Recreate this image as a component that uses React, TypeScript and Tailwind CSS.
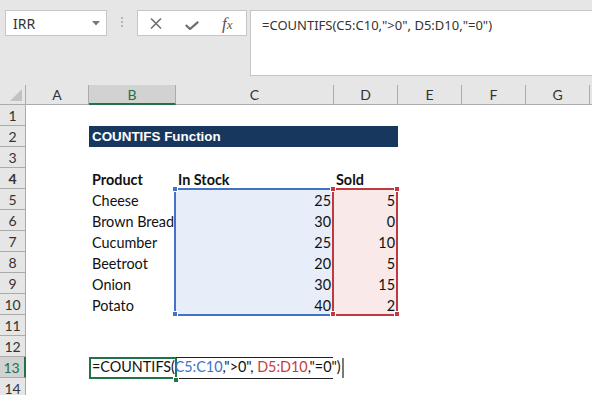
import React from "react";

type Row = {
  n: number;
  product?: string;
  stock?: number;
  sold?: number;
};

const dataRows: Row[] = [
  { n: 5, product: "Cheese", stock: 25, sold: 5 },
  { n: 6, product: "Brown Bread", stock: 30, sold: 0 },
  { n: 7, product: "Cucumber", stock: 25, sold: 10 },
  { n: 8, product: "Beetroot", stock: 20, sold: 5 },
  { n: 9, product: "Onion", stock: 30, sold: 15 },
  { n: 10, product: "Potato", stock: 40, sold: 2 },
];

const RowHead = ({ n, active = false }: { n: number; active?: boolean }) => (
  <div
    className={
      active
        ? "w-[26px] h-full shrink-0 flex items-center justify-center bg-[#d2d2d2] border-b border-[#ababab] border-r-2 border-r-[#217346] text-[#217346] text-[14px] pr-[1px]"
        : "w-[26px] h-full shrink-0 flex items-center justify-center bg-[#e6e6e6] border-b border-r border-[#ababab] text-[#333] text-[14px]"
    }
  >
    {n}
  </div>
);

const EmptyRow = ({ n }: { n: number }) => (
  <div className="flex h-[21px]">
    <RowHead n={n} />
    <div className="flex-1" />
  </div>
);

const Handle = ({ className }: { className: string }) => (
  <div className={"absolute w-[6px] h-[6px] border border-white " + className} />
);

export default function App() {
  return (
    <div className="w-[592px] h-[395px] overflow-hidden bg-white font-['Lato',sans-serif] text-[#111]">
      {/* toolbar: name box, function buttons, formula bar */}
      <div className="h-[85px] bg-[#e6e6e6] flex items-start pt-[10px] pl-[5px]">
        <div className="w-[102px] h-[26px] bg-white border border-[#c6c6c6] flex items-center justify-between pl-[7px] pr-[6px] font-['Noto_Sans',sans-serif] text-[14px] text-[#333]">
          <span>IRR</span>
          <svg width="8" height="5" viewBox="0 0 8 5">
            <polygon points="0,0 8,0 4,4.5" fill="#777" />
          </svg>
        </div>
        <div className="ml-[14px] mt-[7px] flex flex-col gap-[2px]">
          <div className="w-[2px] h-[2px] bg-[#b4b4b4]" />
          <div className="w-[2px] h-[2px] bg-[#b4b4b4]" />
          <div className="w-[2px] h-[2px] bg-[#b4b4b4]" />
        </div>
        <div className="ml-[14px] w-[110px] h-[26px] bg-white border border-[#c6c6c6] flex items-center">
          <svg className="ml-[12px]" width="12" height="11" viewBox="0 0 12 11">
            <path d="M1 0.5 L11 10.5 M11 0.5 L1 10.5" stroke="#6d6d6d" strokeWidth="1.5" fill="none" />
          </svg>
          <svg className="ml-[23px] mt-[4px]" width="14" height="9" viewBox="0 0 14 9">
            <path d="M0.8 4 L5 8 L13.2 0.8" stroke="#6d6d6d" strokeWidth="2.2" fill="none" />
          </svg>
          <span className="ml-[23px] font-['Liberation_Serif',serif] italic text-[17px] text-[#555] leading-none">
            f<span className="text-[13px]">x</span>
          </span>
        </div>
        <div className="ml-[3px] flex-1 h-[66px] bg-white border border-r-0 border-[#c6c6c6] pl-[11px] pt-[5px] font-['Noto_Sans',sans-serif] text-[13px] text-[#333] whitespace-nowrap">
          =COUNTIFS(C5:C10,"&gt;0", D5:D10,"=0")
        </div>
      </div>

      {/* column headers */}
      <div className="flex h-[20px] bg-[#e6e6e6] border-b border-[#ababab] text-[14px] text-[#333]">
        <div className="w-[26px] shrink-0 border-r border-[#ababab] flex items-end justify-end pr-[3px] pb-[3px]">
          <svg width="12" height="12" viewBox="0 0 12 12">
            <polygon points="12,0 12,12 0,12" fill="#c2c2c2" />
          </svg>
        </div>
        <div className="w-[63px] shrink-0 border-r border-[#ababab] flex items-center justify-center">A</div>
        <div className="w-[87px] shrink-0 bg-[#d2d2d2] border-r border-[#ababab] border-b-2 border-b-[#217346] flex items-center justify-center text-[#217346] -mb-[1px]">
          B
        </div>
        <div className="w-[158px] shrink-0 border-r border-[#ababab] flex items-center justify-center">C</div>
        <div className="w-[64px] shrink-0 border-r border-[#ababab] flex items-center justify-center">D</div>
        <div className="w-[64px] shrink-0 border-r border-[#ababab] flex items-center justify-center">E</div>
        <div className="w-[64px] shrink-0 border-r border-[#ababab] flex items-center justify-center">F</div>
        <div className="w-[64px] shrink-0 border-r border-[#ababab] flex items-center justify-center">G</div>
        <div className="flex-1" />
      </div>

      {/* sheet body */}
      <div className="relative text-[14.4px] leading-[19px]">
        <EmptyRow n={1} />
        <div className="flex h-[21px]">
          <RowHead n={2} />
          <div className="w-[63px] shrink-0" />
          <div className="w-[309px] shrink-0 bg-[#17375e] text-white font-['Liberation_Sans',sans-serif] font-bold text-[13.4px] flex items-center pl-[3px]">
            COUNTIFS Function
          </div>
        </div>
        <EmptyRow n={3} />
        <div className="flex h-[21px] font-bold">
          <RowHead n={4} />
          <div className="w-[63px] shrink-0" />
          <div className="w-[87px] shrink-0 flex items-end pl-[3px]">Product</div>
          <div className="w-[158px] shrink-0 flex items-end pl-[2px]">In Stock</div>
          <div className="w-[64px] shrink-0 flex items-end pl-[2px]">Sold</div>
        </div>
        {dataRows.map((r) => (
          <div key={r.n} className="flex h-[21px]">
            <RowHead n={r.n} />
            <div className="w-[63px] shrink-0" />
            <div className="w-[87px] shrink-0 flex items-end pl-[3px] whitespace-nowrap">{r.product}</div>
            <div className="w-[158px] shrink-0 bg-[#e8eef9] flex items-end justify-end pr-[3px]">{r.stock}</div>
            <div className="w-[64px] shrink-0 bg-[#f9e9e9] flex items-end justify-end pr-[3px]">{r.sold}</div>
          </div>
        ))}
        <EmptyRow n={11} />
        <EmptyRow n={12} />
        <div className="flex h-[21px]">
          <RowHead n={13} active />
          <div className="w-[63px] shrink-0" />
          <div className="relative w-[87px] shrink-0 flex items-end pl-[3px] pb-[2px] whitespace-nowrap">
            <span className="relative z-10">
              =COUNTIFS(<span className="text-[#3c73c8]">C5:C10</span>,"&gt;0", <span className="text-[#c63d3d]">D5:D10</span>,"=0")
            </span>
            {/* editing cell frame */}
            <div className="absolute left-0 top-0 w-[88px] h-[22px] border-2 border-[#217346]" />
            <div className="absolute left-[87px] top-0 w-[157px] h-[22px] border-y border-[#222]" />
            <div className="absolute left-[84px] top-[20px] w-[6px] h-[6px] bg-[#217346] border border-white" />
            <div className="absolute left-[253px] top-[1px] w-[2px] h-[20px] bg-[#7a7a7a]" />
          </div>
        </div>
        <EmptyRow n={14} />

        {/* range highlights for C5:C10 and D5:D10 */}
        <div className="absolute left-[174px] top-[83px] w-[160px] h-[128px] border-2 border-[#4472c4] pointer-events-none" />
        <Handle className="left-[172px] top-[81px] bg-[#4472c4]" />
        <Handle className="left-[172px] top-[206px] bg-[#4472c4]" />
        <div className="absolute left-[332px] top-[83px] w-[66px] h-[128px] border-2 border-[#c0393f] pointer-events-none" />
        <Handle className="left-[330px] top-[81px] bg-[#c0393f]" />
        <Handle className="left-[394px] top-[81px] bg-[#c0393f]" />
        <Handle className="left-[330px] top-[206px] bg-[#c0393f]" />
        <Handle className="left-[394px] top-[206px] bg-[#c0393f]" />
      </div>
    </div>
  );
}
